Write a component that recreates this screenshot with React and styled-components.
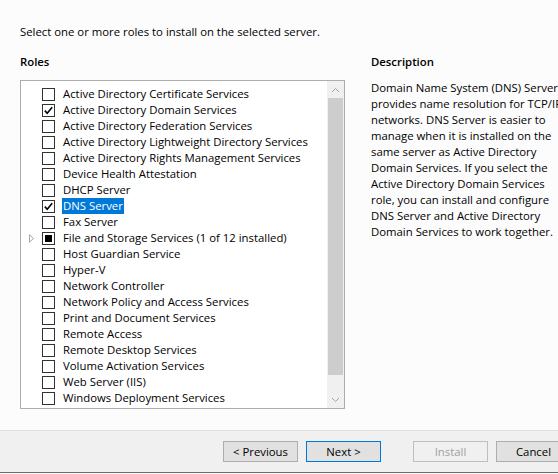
import React from "react";
import styled, { createGlobalStyle } from "styled-components";

const Global = createGlobalStyle`
  html, body { margin: 0; padding: 0; width: 558px; height: 474px; overflow: hidden; background: #fcfcfc; }
  * { box-sizing: border-box; }
  body { font-family: "Open Sans", "Noto Sans", sans-serif; font-size: 11.35px; color: #000; }
`;

const Window = styled.div`
  width: 580px;
  height: 474px;
  display: flex;
  flex-direction: column;
  background: #fcfcfc;
`;

const Content = styled.div`
  height: 430px;
  padding: 24px 0 0 20px;
  display: flex;
  flex-direction: column;
`;

const Intro = styled.div`
  line-height: 16px;
  height: 16px;
`;

const Columns = styled.div`
  margin-top: 14px;
  display: flex;
  gap: 26px;
`;

const LeftCol = styled.div`
  width: 325px;
  flex: none;
  display: flex;
  flex-direction: column;
`;

const RightCol = styled.div`
  display: flex;
  flex-direction: column;
  white-space: nowrap;
`;

const Heading = styled.div`
  font-weight: 600;
  line-height: 16px;
  height: 16px;
  margin-bottom: 10px;
`;

const ListBox = styled.div`
  height: 329px;
  border: 1px solid #adadad;
  background: #fff;
  display: flex;
`;

const List = styled.div`
  flex: 1;
  padding-top: 5px;
  display: flex;
  flex-direction: column;
`;

const Row = styled.div`
  height: 16px;
  display: flex;
  align-items: center;
`;

const ExpanderSlot = styled.div`
  width: 21px;
  height: 16px;
  display: flex;
  align-items: center;
  padding-left: 8px;
`;

const Box = styled.div`
  width: 13px;
  height: 13px;
  border: 1px solid #333;
  background: #fff;
  display: flex;
  align-items: center;
  justify-content: center;
  flex: none;
`;

const Partial = styled.div`
  width: 7px;
  height: 7px;
  background: #000;
`;

const Label = styled.span`
  margin-left: 7px;
  padding: 0 1px;
  line-height: 16px;
  height: 16px;
  white-space: nowrap;
  background: ${(p) => (p.$selected ? "#0078d7" : "transparent")};
  color: ${(p) => (p.$selected ? "#fff" : "#000")};
`;

const Scrollbar = styled.div`
  width: 17px;
  background: #f0f0f0;
  display: flex;
  flex-direction: column;
`;

const Arrow = styled.div`
  height: 17px;
  display: flex;
  align-items: center;
  justify-content: center;
`;

const Track = styled.div`
  flex: 1;
  display: flex;
  flex-direction: column;
`;

const Thumb = styled.div`
  height: 277px;
  margin: 0 1px;
  background: #cdcdcd;
`;

const DescLine = styled.div`
  line-height: 16px;
  height: 16px;
`;

const Footer = styled.div`
  height: 43px;
  border-top: 1px solid #dfdfdf;
  background: #f0f0f0;
  border-bottom: 1px solid #6b6b6b;
  display: flex;
  justify-content: flex-end;
  align-items: flex-start;
  padding: 10px 9px 0 0;
`;

const Button = styled.div`
  width: 75px;
  height: 21px;
  margin-left: ${(p) => p.$gap || 8}px;
  border: 1px solid ${(p) => (p.$default ? "#0078d7" : p.$disabled ? "#bfbfbf" : "#adadad")};
  background: ${(p) => (p.$disabled ? "#f0f0f0" : "#e1e1e1")};
  color: ${(p) => (p.$disabled ? "#a0a0a0" : "#000")};
  display: flex;
  align-items: center;
  justify-content: center;
  line-height: 16px;
`;

const roles = [
  ["Active Directory Certificate Services"],
  ["Active Directory Domain Services", "checked"],
  ["Active Directory Federation Services"],
  ["Active Directory Lightweight Directory Services"],
  ["Active Directory Rights Management Services"],
  ["Device Health Attestation"],
  ["DHCP Server"],
  ["DNS Server", "checked", true],
  ["Fax Server"],
  ["File and Storage Services (1 of 12 installed)", "partial", false, true],
  ["Host Guardian Service"],
  ["Hyper-V"],
  ["Network Controller"],
  ["Network Policy and Access Services"],
  ["Print and Document Services"],
  ["Remote Access"],
  ["Remote Desktop Services"],
  ["Volume Activation Services"],
  ["Web Server (IIS)"],
  ["Windows Deployment Services"],
];

const desc = [
  "Domain Name System (DNS) Server",
  "provides name resolution for TCP/IP",
  "networks. DNS Server is easier to",
  "manage when it is installed on the",
  "same server as Active Directory",
  "Domain Services. If you select the",
  "Active Directory Domain Services",
  "role, you can install and configure",
  "DNS Server and Active Directory",
  "Domain Services to work together.",
];

const Check = () => (
  <svg width="11" height="11" viewBox="0 0 11 11">
    <path d="M1.8 5.6 L4.2 8.2 L9.2 2.2" fill="none" stroke="#000" strokeWidth="1.6" />
  </svg>
);

const Expander = () => (
  <svg width="6" height="9" viewBox="0 0 6 9">
    <path d="M0.5 0.8 L4.5 4.5 L0.5 8.2 Z" fill="none" stroke="#a6a6a6" strokeWidth="1" />
  </svg>
);

const Chevron = ({ up }) => (
  <svg width="9" height="6" viewBox="0 0 9 6">
    <path d={up ? "M1 5 L4.5 1.5 L8 5" : "M1 1 L4.5 4.5 L8 1"} fill="none" stroke="#a3a3a3" strokeWidth="1" />
  </svg>
);

export default function App() {
  return (
    <>
      <Global />
      <Window>
        <Content>
          <Intro>Select one or more roles to install on the selected server.</Intro>
          <Columns>
            <LeftCol>
              <Heading>Roles</Heading>
              <ListBox>
                <List>
                  {roles.map(([name, state, selected, expandable]) => (
                    <Row key={name}>
                      <ExpanderSlot>{expandable && <Expander />}</ExpanderSlot>
                      <Box>
                        {state === "checked" && <Check />}
                        {state === "partial" && <Partial />}
                      </Box>
                      <Label $selected={selected}>{name}</Label>
                    </Row>
                  ))}
                </List>
                <Scrollbar>
                  <Arrow><Chevron up /></Arrow>
                  <Track><Thumb /></Track>
                  <Arrow><Chevron /></Arrow>
                </Scrollbar>
              </ListBox>
            </LeftCol>
            <RightCol>
              <Heading>Description</Heading>
              {desc.map((l) => (
                <DescLine key={l}>{l}</DescLine>
              ))}
            </RightCol>
          </Columns>
        </Content>
        <Footer>
          <Button>&lt; Previous</Button>
          <Button $default>Next &gt;</Button>
          <Button $gap={32} $disabled>Install</Button>
          <Button>Cancel</Button>
        </Footer>
      </Window>
    </>
  );
}
